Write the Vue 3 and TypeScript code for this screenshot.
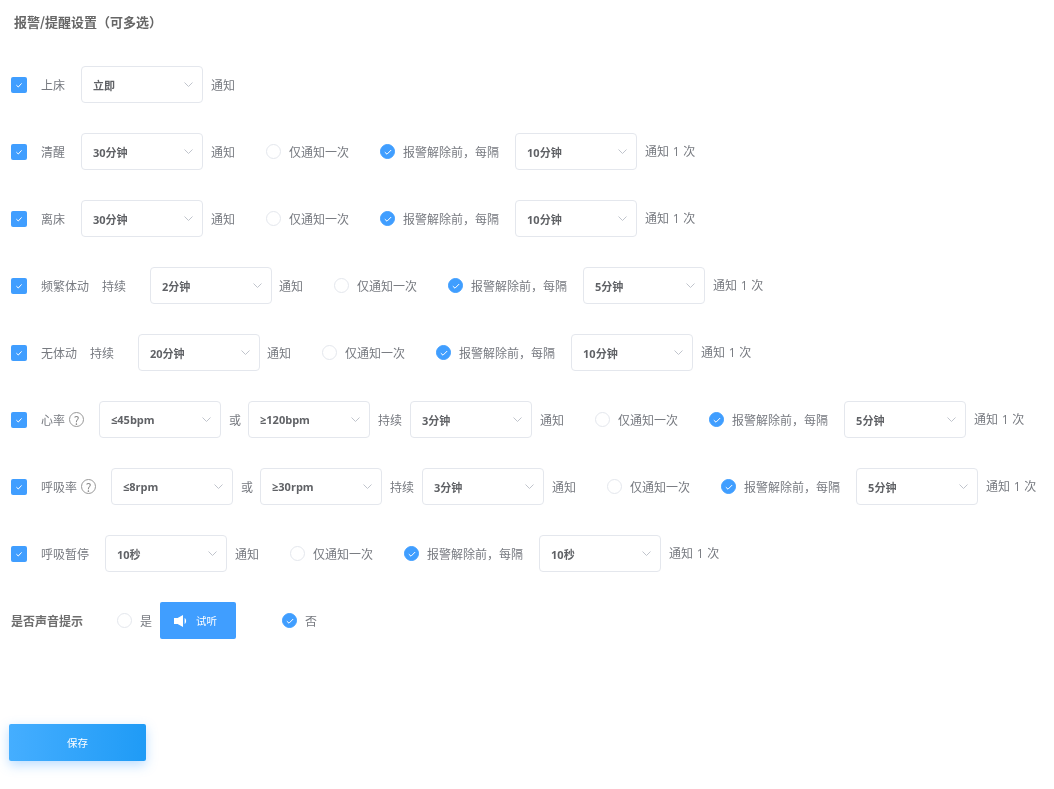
<script setup lang="ts">
type Part =
  | { kind: 'text'; value: string; cls?: string }
  | { kind: 'select'; value: string; cls?: string }
  | { kind: 'help' }

interface Row {
  label: string
  parts: Part[]
  repeat?: string
}

const t = (value: string, cls?: string): Part => ({ kind: 'text', value, cls })
const s = (value: string, cls?: string): Part => ({ kind: 'select', value, cls })
const help: Part = { kind: 'help' }

const rows: Row[] = [
  { label: '上床', parts: [s('立即', 'lead'), t('通知')] },
  { label: '清醒', parts: [s('30分钟', 'lead'), t('通知')], repeat: '10分钟' },
  { label: '离床', parts: [s('30分钟', 'lead'), t('通知')], repeat: '10分钟' },
  { label: '频繁体动', parts: [t('持续', 'hold'), s('2分钟', 'after-hold'), t('通知', 'tight')], repeat: '5分钟' },
  { label: '无体动', parts: [t('持续', 'hold'), s('20分钟', 'after-hold'), t('通知', 'tight')], repeat: '10分钟' },
  { label: '心率', parts: [help, s('≤45bpm', 'lead'), t('或'), s('≥120bpm', 'tight'), t('持续'), s('3分钟'), t('通知')], repeat: '5分钟' },
  { label: '呼吸率', parts: [help, s('≤8rpm', 'lead'), t('或'), s('≥30rpm', 'tight'), t('持续'), s('3分钟'), t('通知')], repeat: '5分钟' },
  { label: '呼吸暂停', parts: [s('10秒', 'lead'), t('通知')], repeat: '10秒' },
]
</script>

<template>
  <main class="page">
    <h2 class="title">报警/提醒设置（可多选）</h2>

    <div v-for="row in rows" :key="row.label" class="row">
      <span class="checkbox">
        <svg width="10" height="10" viewBox="0 0 10 10"><path d="M2.4 5.2 4.3 7 7.6 3.4" fill="none" stroke="#fff" stroke-width="1" /></svg>
      </span>
      <span class="label">{{ row.label }}</span>
      <template v-for="(part, i) in row.parts" :key="i">
        <span v-if="part.kind === 'help'" class="help">?</span>
        <span v-else-if="part.kind === 'text'" class="text" :class="part.cls">{{ part.value }}</span>
        <span v-else class="select" :class="part.cls">
          <span>{{ part.value }}</span>
          <svg width="9" height="5" viewBox="0 0 9 5"><path d="M.5.5 4.5 4.5 8.5.5" fill="none" stroke="#c0c4cc" stroke-width="1" /></svg>
        </span>
      </template>
      <template v-if="row.repeat">
        <span class="radio far"></span>
        <span class="text">仅通知一次</span>
        <span class="radio on far">
          <svg width="10" height="10" viewBox="0 0 10 10"><path d="M1.8 5.2 4 7.2 8.2 3" fill="none" stroke="#fff" stroke-width="1" /></svg>
        </span>
        <span class="text">报警解除前，每隔</span>
        <span class="select after-long">
          <span>{{ row.repeat }}</span>
          <svg width="9" height="5" viewBox="0 0 9 5"><path d="M.5.5 4.5 4.5 8.5.5" fill="none" stroke="#c0c4cc" stroke-width="1" /></svg>
        </span>
        <span class="text count">通知 1 次</span>
      </template>
    </div>

    <div class="row sound">
      <span class="sound-label">是否声音提示</span>
      <span class="radio sound-first"></span>
      <span class="text">是</span>
      <button class="listen" type="button">
        <svg width="15" height="12" viewBox="0 0 15 12"><path d="M0 3H3.6L9 0V12L3.6 9H0ZM10.6 3C12.6 4.2 12.6 7.8 10.6 9Z" fill="#fff" /></svg>
        <span>试听</span>
      </button>
      <span class="radio on sound-no">
        <svg width="10" height="10" viewBox="0 0 10 10"><path d="M1.8 5.2 4 7.2 8.2 3" fill="none" stroke="#fff" stroke-width="1" /></svg>
      </span>
      <span class="text">否</span>
    </div>

    <button class="save" type="button">保存</button>
  </main>
</template>

<style scoped>
.page {
  box-sizing: border-box;
  width: 1054px;
  height: 789px;
  padding: 13px 0 0 11px;
  background: #fff;
  color: #777a80;
  font-family: "Noto Sans CJK SC", "Noto Sans", sans-serif;
  font-size: 12px;
  filter: blur(0.55px);
  overflow: hidden;
}
.title {
  margin: 0 0 36px 3px;
  font-size: 13px;
  line-height: 17px;
  font-weight: 700;
  color: #666;
}
.row {
  display: flex;
  align-items: center;
  gap: 8px;
  height: 37px;
  margin-bottom: 30px;
  white-space: nowrap;
}
.checkbox {
  display: flex;
  align-items: center;
  justify-content: center;
  width: 16px;
  height: 16px;
  flex: none;
  border-radius: 2px;
  background: #409eff;
}
.label {
  margin-left: 6px;
}
.text {
  line-height: 16px;
}
.hold {
  margin-left: 5px;
}
.count {
  font-family: "Open Sans", "Noto Sans CJK SC", sans-serif;
  word-spacing: 0.5px;
}
.help {
  display: flex;
  align-items: center;
  justify-content: center;
  box-sizing: border-box;
  width: 15px;
  height: 15px;
  margin-left: -4px;
  flex: none;
  border: 1px solid #999;
  border-radius: 50%;
  color: #888;
  font-size: 12px;
  line-height: 1;
}
.select {
  box-sizing: border-box;
  display: flex;
  align-items: center;
  justify-content: space-between;
  width: 122px;
  height: 37px;
  flex: none;
  padding: 0 9px 0 11px;
  border: 1px solid #e4e7ed;
  border-radius: 4px;
  background: #fff;
  color: #606266;
  font-family: "Open Sans", "Noto Sans CJK SC", sans-serif;
  font-size: 11px;
  font-weight: 700;
}
.lead {
  margin-left: 8px;
}
.help + .lead {
  margin-left: 7px;
}
.after-hold {
  margin-left: 16px;
}
.after-long {
  margin-left: 8px;
}
.tight {
  margin-left: -1px;
}
.radio {
  box-sizing: border-box;
  display: flex;
  align-items: center;
  justify-content: center;
  width: 15px;
  height: 15px;
  flex: none;
  border: 1px solid #e4e7ed;
  border-radius: 50%;
  background: #fff;
}
.radio.on {
  border-color: #409eff;
  background: #409eff;
}
.far {
  margin-left: 23px;
}
.sound {
  margin-bottom: 85px;
}
.sound-label {
  width: 72px;
  font-weight: 700;
  color: #6e6e6e;
}
.sound-first {
  margin-left: 26px;
}
.listen {
  display: flex;
  align-items: center;
  gap: 7px;
  box-sizing: border-box;
  width: 76px;
  height: 37px;
  padding: 0 0 0 14px;
  border: 0;
  border-radius: 2px;
  background: #409eff;
  color: #fff;
  font: inherit;
  font-size: 10.5px;
}
.sound-no {
  margin-left: 38px;
}
.save {
  display: block;
  width: 137px;
  height: 37px;
  margin-left: -2px;
  border: 0;
  border-radius: 2px;
  background: linear-gradient(90deg, #45aeff, #1f9bf6);
  box-shadow: 0 4px 12px rgba(64, 158, 255, 0.35);
  color: #fff;
  font: inherit;
  font-size: 10.5px;
}
</style>
